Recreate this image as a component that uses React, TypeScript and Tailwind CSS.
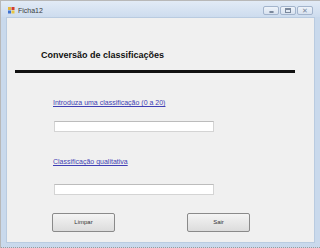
import React from 'react'

export default function App() {
  return (
    <div className="w-[320px] h-[248px] bg-[#c9d9ec] flex flex-col border-t border-l border-[#b8b8b8] overflow-hidden" style={{ fontFamily: '"Liberation Sans", Arial, sans-serif' }}>
      <TitleBar />
      <div className="flex-1 mx-[5px] mb-[4px] bg-[#f0f0f0] border border-[#b9cbe0] flex flex-col">
        <div className="ml-[34px] mt-[33px] text-[9px] leading-none font-bold text-[#111]">Conversão de classificações</div>
        <div className="ml-[8px] mt-[10px] w-[280px] h-[3px] bg-[#111]" />
        <Label text="Introduza uma classificação (0 a 20)" mt="mt-[26px]" />
        <Input mt="mt-[15px]" />
        <Label text="Classificação qualitativa" mt="mt-[26px]" />
        <Input mt="mt-[19px]" />
        <div className="mt-[18px] flex">
          <Button text="Limpar" className="ml-[45px]" />
          <Button text="Sair" className="ml-[72px]" />
        </div>
      </div>
      <div className="h-[1px] bg-[repeating-linear-gradient(90deg,#9a9a9a_0_1px,transparent_1px_2px)]" />
    </div>
  )
}

function TitleBar() {
  return (
    <div className="h-[16px] bg-gradient-to-b from-[#e2ebf6] to-[#cddcee] flex items-center px-[7px]">
      <svg width="7" height="7" viewBox="0 0 7 7" className="mt-[3px]">
        <rect x="0" y="0" width="3" height="3" fill="#e2b53a" />
        <rect x="3.5" y="0" width="3" height="3" fill="#d43b2f" />
        <rect x="0" y="3.5" width="3" height="3" fill="#3b6fcf" />
        <rect x="3.5" y="3.5" width="3" height="3" fill="#e8c640" />
      </svg>
      <span className="ml-[3px] mt-[3px] text-[7px] leading-none text-[#3a3a3a]">Ficha12</span>
      <div className="ml-auto mt-[3px] flex gap-[1px]">
        <WinBtn>
          <div className="w-[5px] h-[2px] border border-[#7a889c] rounded-[1px] mt-[3px]" />
        </WinBtn>
        <WinBtn>
          <div className="w-[6px] h-[5px] border border-[#7a889c] border-t-2" />
        </WinBtn>
        <WinBtn>
          <span className="text-[7px] leading-none text-[#7a889c]">✕</span>
        </WinBtn>
      </div>
    </div>
  )
}

function WinBtn({ children }: { children: React.ReactNode }) {
  return (
    <div className="w-[16px] h-[9px] border border-[#a3b4cc] rounded-[2px] bg-gradient-to-b from-[#eef3fa] to-[#d8e2ef] flex items-center justify-center">
      {children}
    </div>
  )
}

function Label({ text, mt }: { text: string; mt: string }) {
  return <div className={`${mt} ml-[46px] text-[7px] leading-none text-[#3f3fb4] underline`}>{text}</div>
}

function Input({ mt }: { mt: string }) {
  return <div className={`${mt} ml-[47px] w-[160px] h-[11px] bg-white border border-[#d4d4d4] border-t-[#bcbcbc]`} />
}

function Button({ text, className }: { text: string; className: string }) {
  return (
    <div className={`${className} w-[63px] h-[19px] rounded-[2px] border border-[#8a8a8a] bg-gradient-to-b from-[#f4f4f4] to-[#dcdcdc] flex items-center justify-center text-[6px] text-[#333]`}>
      {text}
    </div>
  )
}
